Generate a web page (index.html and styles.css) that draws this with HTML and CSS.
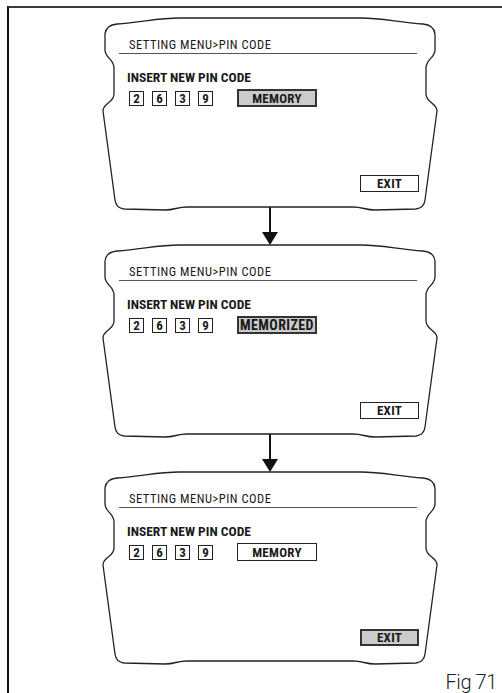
FILE: index.html
```html
<!DOCTYPE html>
<html lang="en">
<head>
    <meta charset="UTF-8">
    <title>Fig 71 - PIN code</title>
    <link rel="stylesheet" href="styles.css">
</head>
<body>
<div class="frame">

    <!-- Step 1: MEMORY selected -->
    <div class="screen">
        <svg class="outline" viewBox="0 0 334 192" width="334" height="192">
            <path d="M14,6 C40,4 56,0 76,0 L258,0 C278,0 294,4 320,6 Q331,7 332,16 L332,32 C332,40 323,41 323,50 L323,76 C323,85 334,85 334,93 L322,182 Q321,190 313,191 L272,192 C262,192 260,189 250,189 L84,189 C74,189 72,192 62,192 L21,191 Q13,190 12,182 L0,93 C0,85 11,85 11,76 L11,50 C11,41 2,40 2,32 L2,16 Q3,7 14,6 Z"/>
        </svg>
        <div class="title">SETTING MENU&gt;PIN CODE</div>
        <div class="label">INSERT NEW PIN CODE</div>
        <div class="pin-row">
            <span class="digit">2</span>
            <span class="digit">6</span>
            <span class="digit">3</span>
            <span class="digit">9</span>
            <span class="btn memory on">MEMORY</span>
        </div>
        <span class="btn exit">EXIT</span>
    </div>

    <svg class="arrow" viewBox="0 0 20 38" width="20" height="38">
        <line x1="10" y1="0" x2="10" y2="26"/>
        <polygon points="2,25 18,25 10,38"/>
    </svg>

    <!-- Step 2: MEMORIZED -->
    <div class="screen">
        <svg class="outline" viewBox="0 0 334 192" width="334" height="192">
            <path d="M14,6 C40,4 56,0 76,0 L258,0 C278,0 294,4 320,6 Q331,7 332,16 L332,32 C332,40 323,41 323,50 L323,76 C323,85 334,85 334,93 L322,182 Q321,190 313,191 L272,192 C262,192 260,189 250,189 L84,189 C74,189 72,192 62,192 L21,191 Q13,190 12,182 L0,93 C0,85 11,85 11,76 L11,50 C11,41 2,40 2,32 L2,16 Q3,7 14,6 Z"/>
        </svg>
        <div class="title">SETTING MENU&gt;PIN CODE</div>
        <div class="label">INSERT NEW PIN CODE</div>
        <div class="pin-row">
            <span class="digit">2</span>
            <span class="digit">6</span>
            <span class="digit">3</span>
            <span class="digit">9</span>
            <span class="btn memory on done">MEMORIZED</span>
        </div>
        <span class="btn exit">EXIT</span>
    </div>

    <svg class="arrow" viewBox="0 0 20 38" width="20" height="38">
        <line x1="10" y1="0" x2="10" y2="26"/>
        <polygon points="2,25 18,25 10,38"/>
    </svg>

    <!-- Step 3: EXIT selected -->
    <div class="screen">
        <svg class="outline" viewBox="0 0 334 192" width="334" height="192">
            <path d="M14,6 C40,4 56,0 76,0 L258,0 C278,0 294,4 320,6 Q331,7 332,16 L332,32 C332,40 323,41 323,50 L323,76 C323,85 334,85 334,93 L322,182 Q321,190 313,191 L272,192 C262,192 260,189 250,189 L84,189 C74,189 72,192 62,192 L21,191 Q13,190 12,182 L0,93 C0,85 11,85 11,76 L11,50 C11,41 2,40 2,32 L2,16 Q3,7 14,6 Z"/>
        </svg>
        <div class="title">SETTING MENU&gt;PIN CODE</div>
        <div class="label">INSERT NEW PIN CODE</div>
        <div class="pin-row">
            <span class="digit">2</span>
            <span class="digit">6</span>
            <span class="digit">3</span>
            <span class="digit">9</span>
            <span class="btn memory">MEMORY</span>
        </div>
        <span class="btn exit on">EXIT</span>
    </div>

    <div class="caption">Fig 71</div>
</div>
</body>
</html>
```

FILE: styles.css
```css
/* Page */
* {
    margin: 0;
    padding: 0;
    box-sizing: border-box;
}

html, body {
    margin: 0;
    background: #fff;
    overflow: hidden;
}

body {
    width: 502px;
    height: 693px;
    font-family: Roboto, "Liberation Sans", sans-serif;
    font-stretch: 75%;
    color: #1a1a1a;
}

.frame {
    margin: 6px 0 0 7px;
    height: 700px;
    border-top: 2px solid #3a3a3a;
    border-left: 2px solid #111;
    padding: 10px 0 0 94px;
    display: flex;
    flex-direction: column;
}

/* Screen */
.screen {
    position: relative;
    width: 334px;
    height: 192px;
    padding: 20px 18px 18px 24px;
    display: flex;
    flex-direction: column;
}

.outline {
    position: absolute;
    left: 0;
    top: 0;
    overflow: visible;
}

.outline path {
    fill: none;
    stroke: #222;
    stroke-width: 1.3;
}

.title, .label, .pin-row, .btn {
    position: relative;
}

.title {
    margin-left: -8px;
    width: 298px;
    padding: 0 0 1px 10px;
    font-size: 12.5px;
    line-height: 14px;
    letter-spacing: 0.5px;
    border-bottom: 1px solid #555;
}

.label {
    margin-top: 16px;
    font-size: 13.5px;
    line-height: 14px;
    font-weight: bold;
}

.pin-row {
    margin-top: 5px;
    padding-left: 2px;
    display: flex;
    align-items: center;
    gap: 8px;
}

.digit {
    width: 15px;
    height: 15px;
    border: 1px solid #222;
    font-size: 13px;
    line-height: 13px;
    font-weight: bold;
    text-align: center;
}

/* Buttons */
.btn {
    display: flex;
    align-items: center;
    justify-content: center;
    height: 18px;
    border: 1px solid #222;
    background: #fff;
    font-size: 13px;
    font-weight: bold;
    letter-spacing: 0.3px;
}

.btn.on {
    border: 2px solid #333;
    background: #cbcbcb;
}

.memory {
    width: 80px;
    margin-left: 16px;
}

.memory.done {
    font-size: 14px;
    letter-spacing: 0.4px;
}

.exit {
    width: 59px;
    height: 17px;
    margin-top: auto;
    align-self: flex-end;
}

/* Arrows between steps */
.arrow {
    display: block;
    margin: -3px 0 0 157px;
}

.arrow line {
    stroke: #111;
    stroke-width: 2;
}

.arrow polygon {
    fill: #111;
}

/* Caption */
.caption {
    align-self: flex-end;
    margin: 8px 5px 0 0;
    font-size: 20px;
    font-weight: 300;
    font-stretch: 100%;
    line-height: 20px;
    letter-spacing: -0.4px;
    color: #222;
}
```
